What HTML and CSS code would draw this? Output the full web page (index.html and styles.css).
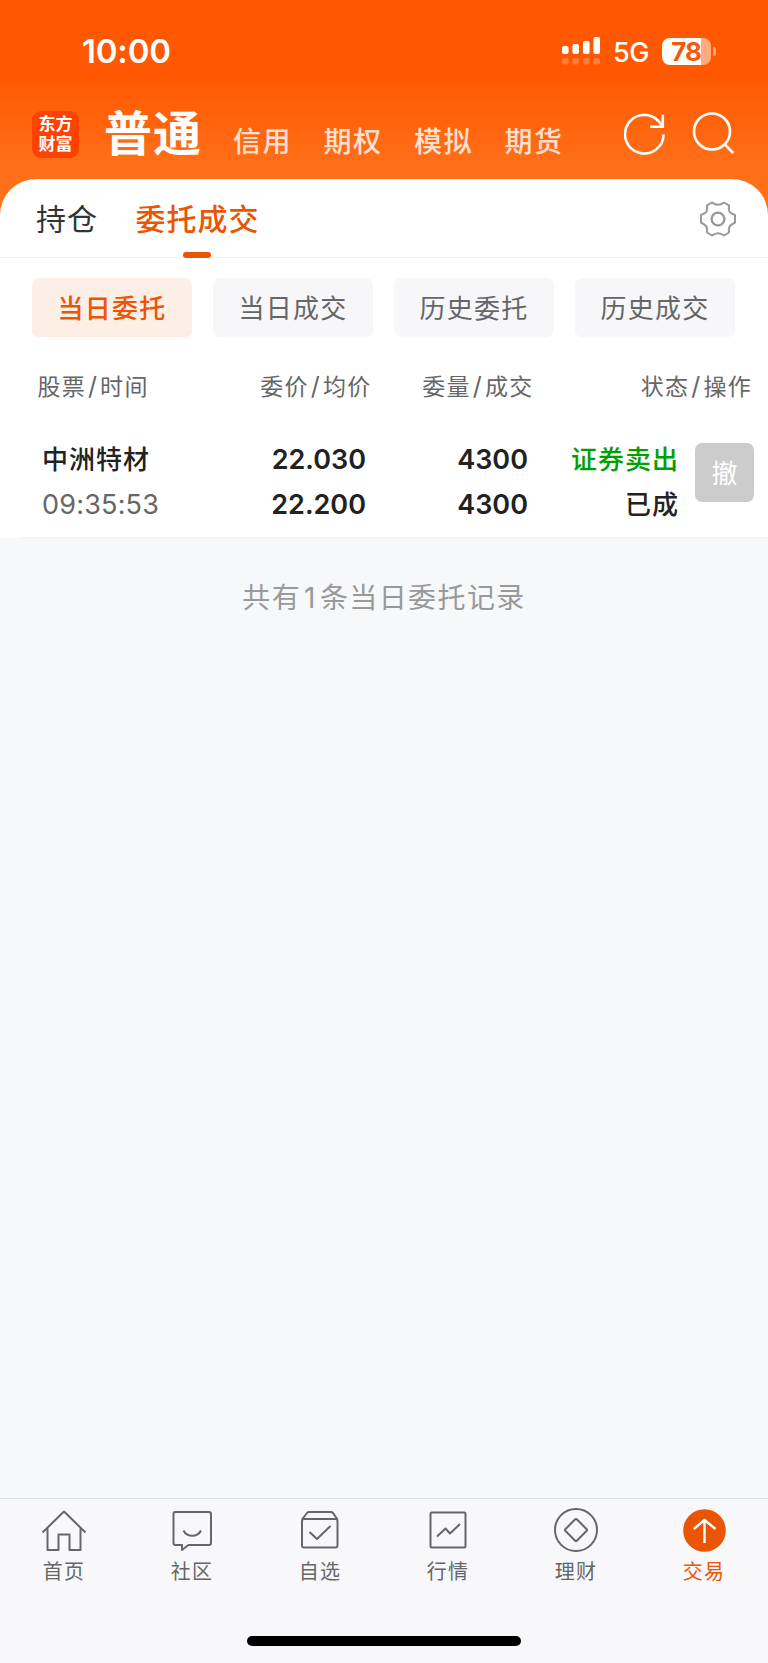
FILE: index.html
```html
<!DOCTYPE html>
<html lang="zh-CN">
    <head>
        <meta charset="UTF-8">
        <meta name="viewport" content="width=device-width, initial-scale=1.0">
        <title>委托成交</title>
        <link rel="stylesheet" href="styles.css">
    </head>
    <body>
        <header class="header">
            <div class="status">
                <span class="clock">10:00</span>
                <svg class="signal" width="40" height="30" viewBox="0 0 40 30" fill="#fff">
                    <rect x="1" y="10" width="6.6" height="8" rx="2"/>
                    <rect x="11.4" y="8" width="6.6" height="10" rx="2"/>
                    <rect x="22" y="5" width="6.6" height="13" rx="2"/>
                    <rect x="32.4" y="1" width="6.6" height="17" rx="2"/>
                    <g opacity="0.22">
                        <rect x="1" y="22" width="6.6" height="6.6" rx="2"/>
                        <rect x="11.4" y="22" width="6.6" height="6.6" rx="2"/>
                        <rect x="22" y="22" width="6.6" height="6.6" rx="2"/>
                        <rect x="32.4" y="22" width="6.6" height="6.6" rx="2"/>
                    </g>
                </svg>
                <span class="network">5G</span>
                <div class="battery">78</div>
                <div class="nub"></div>
            </div>
            <div class="topbar">
                <div class="logo">东方<br>财富</div>
                <h1>普通</h1>
                <nav class="accounts">
                    <a>信用</a>
                    <a>期权</a>
                    <a>模拟</a>
                    <a>期货</a>
                </nav>
                <svg class="refresh" width="44" height="44" viewBox="0 0 44 44" fill="none" stroke="#fff" stroke-width="2.6">
                    <path d="M39.6 22.5A19.3 19.3 0 1 1 34.4 9L38.5 14"/>
                    <path d="M38.8 2.8V14.8H26.2"/>
                </svg>
                <svg class="search" width="44" height="44" viewBox="0 0 44 44" fill="none" stroke="#fff" stroke-width="2.6">
                    <circle cx="20" cy="19.5" r="18"/>
                    <path d="M32.5 32.2L41.2 41"/>
                </svg>
            </div>
        </header>
        <main class="panel">
            <div class="tabs">
                <a class="tab">持仓</a>
                <a class="tab active">委托成交</a>
                <svg class="gear" width="38" height="38" viewBox="-19 -19 38 38" fill="none" stroke="#999" stroke-width="2" stroke-linejoin="round">
                    <path d="M-6 -16.5L-11 -13.7Q-10.4 -8.6 -12 -6.8Q-13.4 -5.3 -17 -4V3.5Q-13.4 5.300 -12 7Q-10.400 8.800 -11 13.500L-6 16.500Q-3 14.200 0 14.200Q3 14.200 6 16.500L11 13.500Q10.400 8.800 12 7Q13.400 5.300 17 3.500V-4Q13.400 -5.300 12 -6.800Q10.400 -8.600 11 -13.700L6 -16.500Q3 -14.200 0 -14.200Q-3 -14.200 -6 -16.500Z"/>
                    <circle r="6.4" stroke-width="2.4"/>
                </svg>
            </div>
            <div class="filters">
                <button class="filter selected">当日委托</button>
                <button class="filter">当日成交</button>
                <button class="filter">历史委托</button>
                <button class="filter">历史成交</button>
            </div>
            <div class="thead">
                <span>股票<i>/</i>时间</span>
                <span>委价<i>/</i>均价</span>
                <span>委量<i>/</i>成交</span>
                <span>状态<i>/</i>操作</span>
            </div>
            <div class="order">
                <div class="cell stock">
                    <b>中洲特材</b>
                    <span class="time">09:35:53</span>
                </div>
                <div class="cell num">
                    <b>22.030</b>
                    <b>22.200</b>
                </div>
                <div class="cell num">
                    <b>4300</b>
                    <b>4300</b>
                </div>
                <div class="cell state">
                    <b class="sell">证券卖出</b>
                    <b>已成</b>
                </div>
                <button class="cancel">撤</button>
            </div>
            <div class="divider"></div>
        </main>
        <p class="summary">共有<span>1</span>条当日委托记录</p>
        <footer class="tabbar">
            <a class="item">
                <svg width="46" height="46" viewBox="0 0 46 46">
                    <path d="M1.5 24.5L23 3.5L44.5 24.5M6.5 20.5V42H17.5V26.5H28.5V42H39.5V20.5"/>
                </svg>
                <span>首页</span>
            </a>
            <a class="item">
                <svg width="46" height="46" viewBox="0 0 46 46">
                    <path d="M6 4H40Q42 4 42 6V35Q42 37 40 37H19.5L13 42V37H6.500Q4.500 37 4.500 35V6Q4.500 4 6 4Z"/>
                    <path d="M14.500 22.500C18 29.500 28.500 29.500 32 22.500"/>
                </svg>
                <span>社区</span>
            </a>
            <a class="item">
                <svg width="46" height="46" viewBox="0 0 46 46">
                    <rect x="5" y="11" width="35.5" height="28.5" rx="2"/>
                    <path d="M5 11.500L10 5Q11 4 12 4H34Q35 4 36 5L40.500 11.500M12.500 24L20 31L33.500 18"/>
                </svg>
                <span>自选</span>
            </a>
            <a class="item">
                <svg width="46" height="46" viewBox="0 0 46 46">
                    <rect x="5.5" y="4.5" width="35" height="35" rx="1.5"/>
                    <path d="M12 28.500L20.500 20.500L25 25.500L35 16"/>
                </svg>
                <span>行情</span>
            </a>
            <a class="item">
                <svg width="46" height="46" viewBox="0 0 46 46">
                    <circle cx="23" cy="22" r="21"/>
                    <path d="M22.200 11.300Q23 10.500 23.800 11.300L33.700 21.200Q34.500 22 33.700 22.800L23.800 32.700Q23 33.500 22.200 32.700L12.300 22.800Q11.500 22 12.300 21.200Z"/>
                </svg>
                <span>理财</span>
            </a>
            <a class="item current">
                <svg width="46" height="46" viewBox="0 0 46 46">
                    <circle class="disc" cx="23.5" cy="22.5" r="21.3"/>
                    <path class="arrow" d="M23.5 35V12M12.8 21L23.5 12L34.500 21"/>
                </svg>
                <span>交易</span>
            </a>
            <div class="home"></div>
        </footer>
    </body>
</html>
```

FILE: styles.css
```css
* {
    margin: 0;
    padding: 0;
    box-sizing: border-box;
}
body {
    height: 1663px;
    display: flex;
    flex-direction: column;
    background-color: #f7f8fa;
    font-family: Inter, "Noto Sans CJK SC", sans-serif;
    color: #222;
}
svg {
    display: block;
    flex-shrink: 0;
}
button {
    border: 0;
    font-family: inherit;
}
.header {
    height: 223px;
    background: linear-gradient(#ff5800 0, #ff5800 74px, #ff6f18 165px);
    color: #fff;
}
.status {
    height: 100px;
    padding: 2px 52px 0 82px;
    display: flex;
    align-items: center;
}
.clock {
    font-size: 33px;
    font-weight: 600;
    letter-spacing: -0.2px;
    margin-right: auto;
}
.network {
    width: 36px;
    margin: 2px 13px 0 12px;
    font-size: 27px;
    font-weight: 500;
    letter-spacing: -0.5px;
}
.battery {
    width: 49px;
    height: 27px;
    padding-right: 1px;
    border-radius: 8px;
    background: linear-gradient(90deg, #fff 39px, #ffab80 39px);
    color: #f55a0a;
    font-size: 26px;
    font-weight: 700;
    line-height: 28px;
    text-align: center;
    letter-spacing: -1px;
}
.nub {
    width: 3px;
    height: 9px;
    margin-left: 2px;
    border-radius: 0 4px 4px 0;
    background-color: #ffab80;
}
.topbar {
    height: 68px;
    padding: 0 32px;
    display: flex;
    align-items: center;
}
.logo {
    width: 47px;
    height: 47px;
    padding-top: 3px;
    border-radius: 9px;
    background-color: #ff4200;
    font-size: 17px;
    font-weight: 700;
    line-height: 20px;
    text-align: center;
}
h1 {
    width: 98px;
    margin-left: 25px;
    font-size: 48px;
    line-height: 68px;
    letter-spacing: 1px;
}
.accounts {
    display: flex;
    margin: 16px auto 0 31px;
}
.accounts a {
    width: 90.5px;
    font-size: 28px;
    font-weight: 500;
    line-height: 40px;
    letter-spacing: 1.5px;
    color: #ffe0d0;
}
.refresh {
    margin-right: 24px;
}
.panel {
    margin-top: -44px;
    height: 359px;
    border-radius: 36px 36px 0 0;
    background-color: #fff;
}
.tabs {
    height: 79px;
    padding: 2px 31px 0 36px;
    display: flex;
    align-items: center;
    border-bottom: 1px solid #f2f2f4;
}
.tab {
    margin-right: 37.5px;
    font-size: 30px;
    line-height: 76px;
    letter-spacing: 1px;
    color: #333;
}
.active {
    position: relative;
    color: #ea5504;
    font-weight: 500;
}
.active::after {
    content: "";
    position: absolute;
    left: 47px;
    bottom: -1px;
    width: 28px;
    height: 6px;
    border-radius: 3px;
    background-color: #ea5504;
}
.gear {
    margin-left: auto;
}
.filters {
    display: flex;
    gap: 21px;
    padding: 20px 32px 0;
}
.filter {
    width: 160px;
    height: 59px;
    padding-bottom: 2px;
    border-radius: 7px;
    background-color: #f7f7fa;
    font-size: 26px;
    letter-spacing: 1.2px;
    color: #666;
}
.selected {
    background-color: #fdeee6;
    color: #ea5504;
    font-weight: 500;
}
.thead {
    display: grid;
    grid-template-columns: 160px 174px 162px 1fr;
    height: 70px;
    padding: 29px 16px 0 37.5px;
    font-size: 23px;
    line-height: 40px;
    letter-spacing: 1.3px;
    color: #666;
}
.thead span {
    text-align: right;
}
.thead span:first-child {
    text-align: left;
}
.thead i {
    display: inline-block;
    width: 14px;
    font-size: 25px;
    font-style: normal;
    text-align: center;
}
.order {
    display: grid;
    grid-template-columns: 160px 164px 162px 151px 59px;
    height: 130px;
    padding: 29px 13px 0 42px;
}
.cell {
    display: flex;
    flex-direction: column;
    font-size: 26px;
    line-height: 45px;
    letter-spacing: 1px;
    margin-top: 1px;
}
.cell b {
    font-weight: 500;
}
.num, .state {
    text-align: right;
}
.cell.num b {
    font-size: 27px;
    font-weight: 600;
    letter-spacing: 0;
}
.time {
    font-size: 27px;
    letter-spacing: 0.2px;
    color: #666;
}
.cell .sell {
    color: #00a000;
}
.cancel {
    height: 59px;
    margin-top: 7px;
    margin-left: 16px;
    width: 59px;
    padding-bottom: 2px;
    border-radius: 7px;
    background-color: #ccc;
    color: #fff;
    font-size: 26px;
}
.divider {
    height: 1px;
    margin-left: 20px;
    background-color: #f1f2f4;
}
.summary {
    padding-top: 38px;
    font-size: 28px;
    line-height: 44px;
    letter-spacing: 1.4px;
    text-align: center;
    color: #999;
}
.summary span {
    margin: 0 3px 0 3px;
}
.tabbar {
    height: 165px;
    margin-top: auto;
    padding-top: 9px;
    border-top: 1px solid #dedfe1;
    background-color: #f8f8fb;
    display: grid;
    grid-template-columns: repeat(6, 1fr);
    align-content: start;
}
.item {
    display: flex;
    flex-direction: column;
    align-items: center;
    font-size: 20px;
    line-height: 36px;
    letter-spacing: 1.3px;
    color: #666;
}
.item svg {
    fill: none;
    stroke: #666;
    stroke-width: 2;
    stroke-linejoin: round;
}
.item .disc {
    fill: #ea5504;
    stroke: none;
}
.item .arrow {
    stroke: #fff;
    stroke-width: 2.4;
}
.current {
    color: #ea5504;
}
.home {
    grid-column: 1 / -1;
    justify-self: center;
    width: 274px;
    height: 10px;
    margin-top: 46px;
    border-radius: 5px;
    background-color: #000;
}
```
